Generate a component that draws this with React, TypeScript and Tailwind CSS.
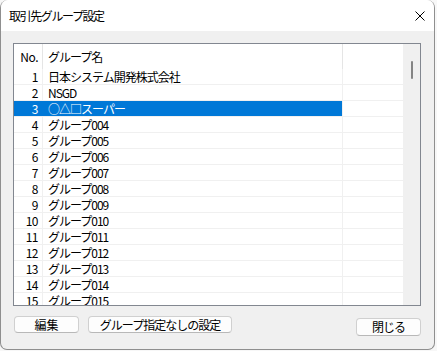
import React from "react";

const rows: { no: number; name: string }[] = [
  { no: 1, name: "日本システム開発株式会社" },
  { no: 2, name: "NSGD" },
  { no: 3, name: "○△□スーパー" },
  ...Array.from({ length: 12 }, (_, i) => ({
    no: i + 4,
    name: "グループ" + String(i + 4).padStart(3, "0"),
  })),
];

const font = { fontFamily: '"Noto Sans CJK JP", "Noto Sans", sans-serif' };

function Btn({ label, className }: { label: string; className: string }) {
  return (
    <button
      className={
        "flex items-center justify-center rounded-[4px] border border-[#d0d0d0] border-b-[#b8b8b8] bg-[#fdfdfd] text-[12px] leading-none text-black " +
        className
      }
    >
      {label}
    </button>
  );
}

export default function App() {
  const selected = 3;
  return (
    <div className="h-[351px] w-[437px] bg-[#f7f7f7]" style={font}>
      <div className="flex h-[350px] w-[435px] flex-col overflow-hidden rounded-t-[8px] rounded-b-[7px] border-x border-b border-[#8f8f8f] bg-[#f0f0f0]">
        {/* タイトルバー */}
        <div className="flex h-[31px] shrink-0 items-center justify-between bg-white pl-[8px] pr-[8px]">
          <span className="text-[12px] tracking-[-1.4px] text-black">取引先グループ設定</span>
          <svg width="10" height="10" viewBox="0 0 10 10" className="mr-px">
            <path d="M0.5 0.5 L9.5 9.5 M9.5 0.5 L0.5 9.5" stroke="#000" strokeWidth="1" />
          </svg>
        </div>

        {/* 一覧 */}
        <div className="ml-[12px] mt-[12px] flex h-[263px] w-[408px] border border-[#828790] bg-white">
          <div className="w-[389px] overflow-hidden">
            <div className="flex h-[25px] text-[12px] text-black">
              <div className="flex w-[29px] items-center justify-end border-r border-[#e5e5e5] pr-[4px] tracking-[-0.5px]">
                No.
              </div>
              <div className="flex w-[300px] items-center border-r border-[#e5e5e5] pl-[5px] tracking-[-1px]">
                グループ名
              </div>
              <div className="flex-1" />
            </div>
            {rows.map((r) => {
              const sel = r.no === selected;
              return (
                <div key={r.no} className="flex h-[16px] border-b border-[#f0f0f0] text-[12px] leading-[15px]">
                  <div
                    className={
                      "w-[29px] border-r pr-[4px] text-right tracking-[-0.5px] " +
                      (sel ? "border-[#0078d7] bg-[#0078d7] text-white" : "border-[#f0f0f0] text-black")
                    }
                  >
                    {r.no}
                  </div>
                  <div
                    className={
                      "w-[300px] border-r border-[#f0f0f0] pl-[5px] tracking-[-1px] whitespace-nowrap " +
                      (sel ? "bg-[#0078d7] text-white" : "text-black")
                    }
                  >
                    {r.name}
                  </div>
                  <div className="flex-1" />
                </div>
              );
            })}
          </div>
          {/* スクロールバー */}
          <div className="flex w-[17px] justify-center bg-[#f0f0f0] pt-[17px]">
            <div className="h-[18px] w-[2px] rounded-full bg-[#858585]" />
          </div>
        </div>

        {/* ボタン */}
        <div className="ml-[13px] mt-[10px] flex items-start">
          <Btn label="編集" className="h-[17px] w-[65px]" />
          <Btn label="グループ指定なしの設定" className="ml-[9px] h-[17px] w-[144px] tracking-[-1px]" />
          <Btn label="閉じる" className="ml-auto mr-[13px] mt-[2px] h-[18px] w-[65px] tracking-[-1px]" />
        </div>
      </div>
    </div>
  );
}
